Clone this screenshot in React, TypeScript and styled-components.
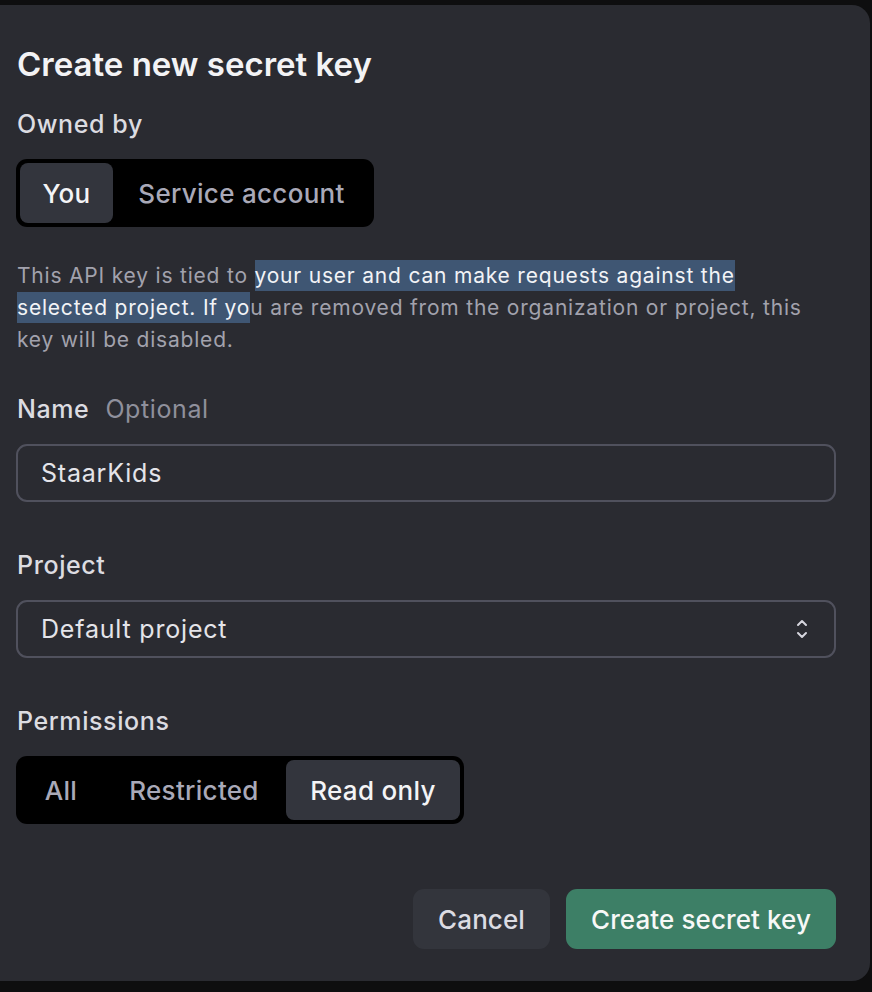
import React from "react";
import styled, { createGlobalStyle } from "styled-components";

const Global = createGlobalStyle`
  html, body { margin: 0; padding: 0; background: #0e0e0f; }
  body { font-family: Inter, "Noto Sans", "Liberation Sans", sans-serif; -webkit-font-smoothing: antialiased; }
  * { box-sizing: border-box; }
`;

const Page = styled.div`
  width: 872px;
  height: 992px;
  padding-top: 5px;
  background: #0e0e0f;
`;

const Panel = styled.div`
  width: 870px;
  height: 976px;
  background: #2a2b31;
  border-radius: 0 18px 18px 0;
  padding: 41px 34px 32px 16px;
  display: flex;
  flex-direction: column;
`;

const Title = styled.h1`
  margin: 0 0 0 1px;
  font-size: 33px;
  line-height: 36px;
  font-weight: 600;
  color: #f3f3f5;
`;

const Label = styled.div<{ $top: number }>`
  margin: ${(p) => p.$top}px 0 21px 1px;
  font-size: 25px;
  line-height: 28px;
  font-weight: 500;
  letter-spacing: 0.6px;
  color: #dcdce1;
  display: flex;
  gap: 16px;
`;

const Optional = styled.span`
  font-weight: 400;
  color: #8f909c;
`;

const Segmented = styled.div`
  display: inline-flex;
  align-self: flex-start;
  background: #000;
  border-radius: 11px;
  padding: 4px;
  height: 68px;
`;

const Seg = styled.div<{ $active?: boolean; $w: number }>`
  width: ${(p) => p.$w}px;
  display: flex;
  align-items: center;
  justify-content: center;
  border-radius: 8px;
  font-size: 26px;
  font-weight: 500;
  letter-spacing: 0.3px;
  background: ${(p) => (p.$active ? "#33353d" : "transparent")};
  color: ${(p) => (p.$active ? "#f4f4f6" : "#a9a9b8")};
`;

const Para = styled.p`
  margin: 33px 0 0 1px;
  font-size: 21px;
  line-height: 32px;
  letter-spacing: 0.8px;
  color: #a2a2ad;
  width: 806px;
`;

const Hl = styled.span`
  background: #3f5673;
  color: #f2f3f6;
  padding: 3px 0;
`;

const Field = styled.div`
  height: 58px;
  border: 2px solid #50515d;
  border-radius: 11px;
  display: flex;
  align-items: center;
  justify-content: space-between;
  padding: 0 26px 0 23px;
  font-size: 25px;
  letter-spacing: 0.8px;
  color: #e4e4e9;
`;

const Actions = styled.div`
  margin-top: auto;
  display: flex;
  justify-content: flex-end;
  gap: 16px;
`;

const Button = styled.button<{ $primary?: boolean }>`
  height: 60px;
  border: none;
  border-radius: 11px;
  padding: 0 25px;
  font-family: inherit;
  font-size: 26px;
  font-weight: 500;
  letter-spacing: 0.1px;
  background: ${(p) => (p.$primary ? "#3d7f66" : "#33353c")};
  color: ${(p) => (p.$primary ? "#f7f8f7" : "#dcdce3")};
`;

const Chevrons = () => (
  <svg width="12" height="22" viewBox="0 0 12 22" fill="none" stroke="#d6d6de" strokeWidth="2" strokeLinecap="round" strokeLinejoin="round">
    <path d="M2 7 L6 3 L10 7" />
    <path d="M2 15 L6 19 L10 15" />
  </svg>
);

export default function App() {
  return (
    <>
      <Global />
      <Page>
        <Panel>
          <Title>Create new secret key</Title>
          <Label $top={28}>Owned by</Label>
          <Segmented>
            <Seg $active $w={93}>You</Seg>
            <Seg $w={257}>Service account</Seg>
          </Segmented>
          <Para>
            This API key is tied to <Hl>your user and can make requests against the selected project. If yo</Hl>u are removed from the organization or project, this key will be disabled.
          </Para>
          <Label $top={39}>
            Name <Optional>Optional</Optional>
          </Label>
          <Field>StaarKids</Field>
          <Label $top={49}>Project</Label>
          <Field>
            Default project
            <Chevrons />
          </Field>
          <Label $top={49}>Permissions</Label>
          <Segmented>
            <Seg $w={82}>All</Seg>
            <Seg $w={184}>Restricted</Seg>
            <Seg $active $w={174}>Read only</Seg>
          </Segmented>
          <Actions>
            <Button>Cancel</Button>
            <Button $primary>Create secret key</Button>
          </Actions>
        </Panel>
      </Page>
    </>
  );
}
